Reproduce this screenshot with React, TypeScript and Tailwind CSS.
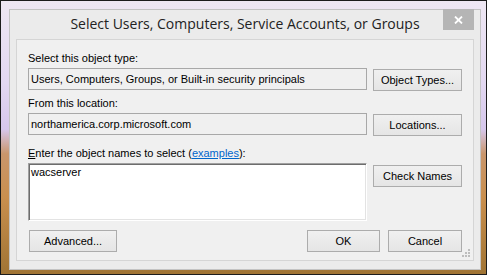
import React from "react";

const btn =
  "h-[22px] border border-[#acacac] bg-[linear-gradient(180deg,#f0f0f0_0%,#e5e5e5_100%)] flex items-center justify-center text-[11px] leading-[13px] text-black";

function Label({ children }: { children: React.ReactNode }) {
  return <div className="h-[13px] text-[11px] leading-[13px] text-black whitespace-nowrap">{children}</div>;
}

function ReadBox({ text }: { text: string }) {
  return (
    <div className="w-[339px] h-[22px] border border-[#a8a8a8] bg-[#f0f0f0] flex items-center pl-[2px] text-[11px] leading-[13px] text-black whitespace-nowrap overflow-hidden">
      {text}
    </div>
  );
}

export default function App() {
  return (
    <div
      className="w-[487px] h-[275px] border border-[#1c1c1c] flex pl-[8px] pt-[8px] pr-[5px] pb-[4px] bg-[linear-gradient(180deg,#eee7f3_0%,#e3d8f1_30%,#d6c7ec_47%,#c9966c_56%,#c98f4e_72%,#a07434_100%)]"
      style={{ fontFamily: '"Liberation Sans", Arial, sans-serif' }}
    >
      <div className="relative flex-1 flex flex-col border border-[#c3c3c3] bg-[#ebebeb] px-[6px] pb-[8px]">
        {/* title bar */}
        <div
          className="h-[29px] shrink-0 pt-[4px] text-center text-[14px] leading-[20px] text-[#222222] whitespace-nowrap"
          style={{ fontFamily: '"Open Sans", "Noto Sans", sans-serif' }}
        >
          Select Users, Computers, Service Accounts, or Groups
        </div>
        <div className="absolute top-[-1px] right-[6px] w-[31px] h-[21px] bg-[#b5b5b5] flex items-center justify-center">
          <svg width="9" height="8" viewBox="0 0 9 8">
            <path d="M1 0.5 L8 7.5 M8 0.5 L1 7.5" stroke="#ffffff" strokeWidth="1.8" />
          </svg>
        </div>

        {/* client area */}
        <div className="relative flex-1 flex flex-col border border-[#d5d5d5] bg-[#f0f0f0] px-[11px] pt-[12px] pb-[8px]">
          <Label>Select this object type:</Label>
          <div className="mt-[3px] flex items-start gap-[6px]">
            <ReadBox text="Users, Computers, Groups, or Built-in security principals" />
            <div className={`${btn} w-[89px] mt-[1px]`}>Object Types...</div>
          </div>

          <div className="mt-[6px]">
            <Label>From this location:</Label>
          </div>
          <div className="mt-[3px] flex items-start gap-[6px]">
            <ReadBox text="northamerica.corp.microsoft.com" />
            <div className={`${btn} w-[89px] mt-[1px]`}>Locations...</div>
          </div>

          <div className="mt-[11px]">
            <Label>
              <span className="underline">E</span>nter the object names to select (
              <span className="text-[#0066cc] underline">examples</span>):
            </Label>
          </div>
          <div className="mt-[3px] flex items-start gap-[6px]">
            <div className="w-[339px] h-[58px] bg-white border border-t-[#a0a0a0] border-l-[#a0a0a0] border-r-[#ffffff] border-b-[#ffffff] shadow-[inset_1px_1px_0_#6d6d6d,inset_-1px_-1px_0_#e3e3e3] pt-[2px] pl-[2px] text-[11px] leading-[13px] text-black">
              wacserver
            </div>
            <div className={`${btn} w-[89px] mt-[2px]`}>Check Names</div>
          </div>

          <div className="mt-[9px] flex items-start">
            <div className={`${btn} w-[88px] ml-[1px]`}>Advanced...</div>
            <div className="flex-1" />
            <div className={`${btn} w-[73px]`}>OK</div>
            <div className={`${btn} w-[74px] ml-[8px]`}>Cancel</div>
          </div>

          <svg className="absolute right-[3px] bottom-[3px]" width="8" height="8" viewBox="0 0 8 8">
            <rect x="6" y="0" width="2" height="2" fill="#bdbdbd" />
            <rect x="3" y="3" width="2" height="2" fill="#bdbdbd" />
            <rect x="6" y="3" width="2" height="2" fill="#bdbdbd" />
            <rect x="0" y="6" width="2" height="2" fill="#bdbdbd" />
            <rect x="3" y="6" width="2" height="2" fill="#bdbdbd" />
            <rect x="6" y="6" width="2" height="2" fill="#bdbdbd" />
          </svg>
        </div>
      </div>
    </div>
  );
}
